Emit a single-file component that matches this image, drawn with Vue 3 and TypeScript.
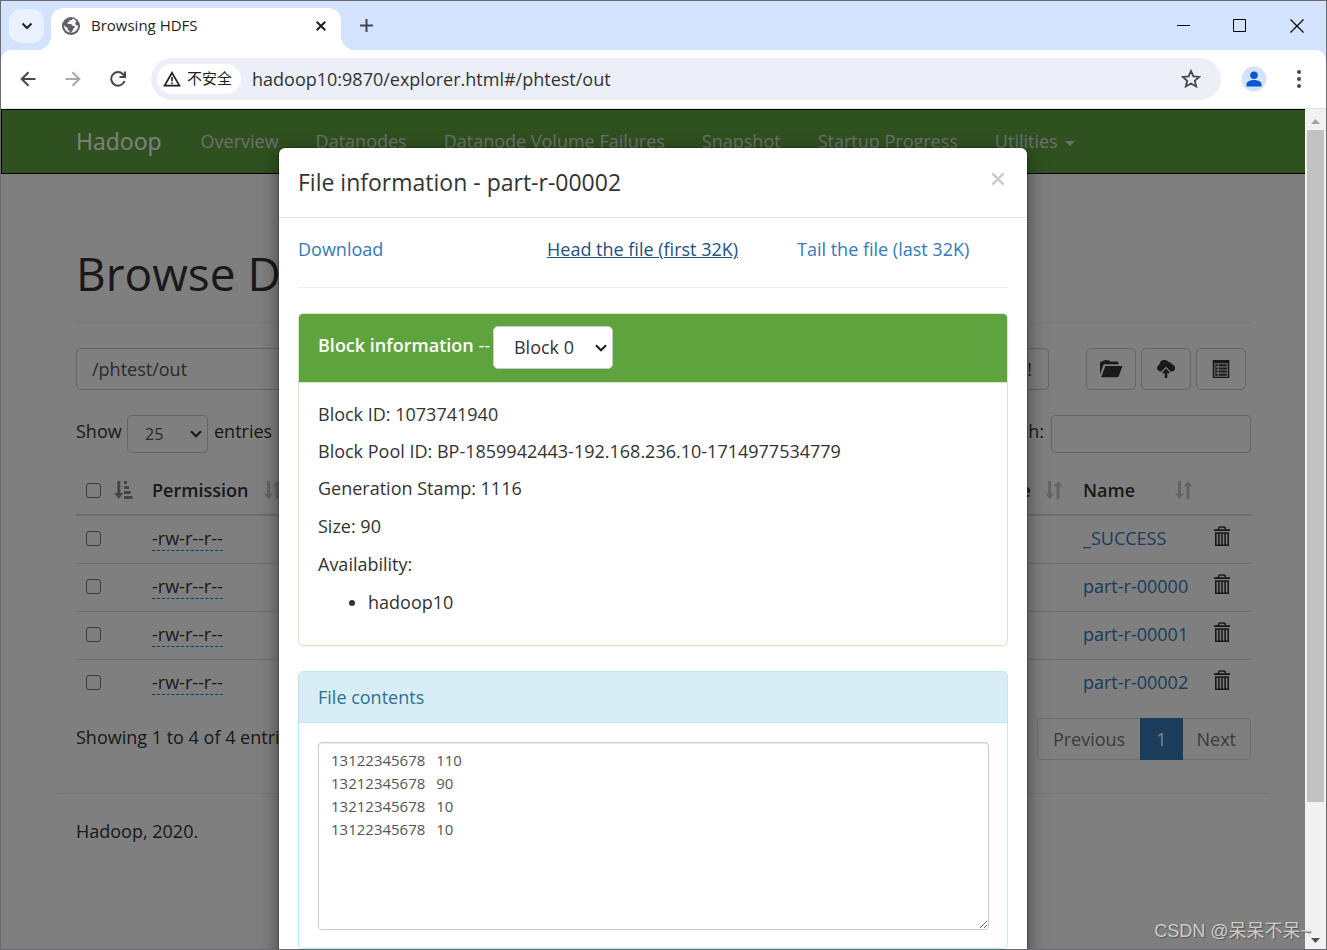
<script setup lang="ts">
import { ref } from 'vue'

const navItems: string[] = ['Overview', 'Datanodes', 'Datanode Volume Failures', 'Snapshot', 'Startup Progress']
const files: string[] = ['_SUCCESS', 'part-r-00000', 'part-r-00001', 'part-r-00002']
const blockInfo: string[] = [
  'Block ID: 1073741940',
  'Block Pool ID: BP-1859942443-192.168.236.10-1714977534779',
  'Generation Stamp: 1116',
  'Size: 90',
  'Availability:',
]
const url = ref('hadoop10:9870/explorer.html#/phtest/out')
const path = ref('/phtest/out')
const search = ref('')
const contents = ref('13122345678\t110\n13212345678\t90\n13212345678\t10\n13122345678\t10\n')
</script>

<template>
  <div class="window">
    <header class="tabstrip">
      <button class="tab-search" aria-label="Search tabs">
        <svg width="12" height="8" viewBox="0 0 12 8"><path d="M1.5 1.5 6 6l4.500-4.500" fill="none" stroke="#1f1f1f" stroke-width="2" /></svg>
      </button>
      <div class="tab">
        <svg class="globe" width="18" height="18" viewBox="0 0 18 18">
          <circle cx="9" cy="9" r="9" fill="#5f6368" />
          <path d="M10.500 1.800c-.3 1.500-1.600 1.600-2.800 1.700-.8.100-.5 1-.9 1.500-.5.500-1.600.3-1.500 1.300.1.800 1.100.6 2 .6 1.200 0 2.500 0 2.800 1.100.2.800.9.900 1.700.9 1.400 0 1.200 1.500.4 2.200-.9.800-1.300 1.300-1.500 2.500-.1.900-1 1.300-1.900 1.700l-1.300.4c.2-1.400-.2-2.200-1.200-2.600-.9-.4-.7-1.500-.7-2.300-1.800-.3-3-1.600-3.700-3 0 4 2.700 7.800 7.100 7.800 4 0 7.200-3.200 7.200-7.200-1.600.3-2.800-.5-2.900-1.700-.1-1.400.2-1.800 1.200-2.300-1-1.400-2.400-2.400-4-2.600z" fill="#fff" />
        </svg>
        <span class="tab-title">Browsing HDFS</span>
        <button class="icon-btn" aria-label="Close tab">
          <svg width="10" height="10" viewBox="0 0 10 10"><path d="m.7.7 8.600 8.600m0-8.600L.7 9.300" stroke="#1f1f1f" stroke-width="2" /></svg>
        </button>
      </div>
      <button class="icon-btn new-tab" aria-label="New tab">
        <svg width="13" height="13" viewBox="0 0 13 13"><path d="M6.500 0v13M0 6.500h13" stroke="#474747" stroke-width="2" /></svg>
      </button>
      <div class="window-controls">
        <button class="icon-btn" aria-label="Minimize"><svg width="14" height="14" viewBox="0 0 14 14"><path d="M1 6.500h13" stroke="#000" /></svg></button>
        <button class="icon-btn" aria-label="Maximize"><svg width="14" height="14" viewBox="0 0 14 14"><path d="M.5.5h12v12H.5z" fill="none" stroke="#000" /></svg></button>
        <button class="icon-btn" aria-label="Close"><svg width="14" height="14" viewBox="0 0 14 14"><path d="m.5.5 13 13m0-13-13 13" stroke="#000" stroke-width="1.200" /></svg></button>
      </div>
    </header>

    <div class="toolbar-wrap">
      <div class="toolbar">
        <button class="icon-btn nav-btn" aria-label="Back">
          <svg width="16" height="16" viewBox="0 0 16 16"><path d="M15.500 8H2M8.500 1.200 1.700 8l6.800 6.800" fill="none" stroke="#474747" stroke-width="2" /></svg>
        </button>
        <button class="icon-btn nav-btn" aria-label="Forward">
          <svg width="16" height="16" viewBox="0 0 16 16"><path d="M.5 8H14M7.500 1.200 14.300 8l-6.800 6.800" fill="none" stroke="#a9a9a9" stroke-width="2" /></svg>
        </button>
        <button class="icon-btn reload" aria-label="Reload">
          <svg width="16" height="16" viewBox="0 0 16 16"><path d="M14.500 10A6.800 6.800 0 1 1 13 3.200l1.200 1.600M15 .5V6H9.500" fill="none" stroke="#474747" stroke-width="2" /></svg>
        </button>
        <div class="omnibox">
          <button class="chip">
            <svg width="18" height="16" viewBox="0 0 18 16"><path d="M9 1.800 16.400 14.700H1.600z" fill="none" stroke="#1f1f1f" stroke-width="1.700" /><path d="M9 6v4.300m0 1.200v1.600" stroke="#1f1f1f" stroke-width="1.600" /></svg>
            <span>不安全</span>
          </button>
          <input v-model="url" class="url" type="text" aria-label="Address" />
          <button class="icon-btn" aria-label="Bookmark">
            <svg width="20" height="20" viewBox="0 0 20 20"><path d="m10 2 2.400 5.400 5.900.5-4.500 3.900 1.400 5.700L10 14.500l-5.200 3 1.400-5.700L1.700 7.900l5.900-.5z" fill="none" stroke="#474747" stroke-width="1.800" /></svg>
          </button>
        </div>
        <button class="icon-btn profile" aria-label="Profile">
          <svg width="26" height="26" viewBox="0 0 26 26"><circle cx="13" cy="13" r="12.500" fill="#d3e3fd" /><circle cx="13" cy="9.200" r="3.800" fill="#0b57d0" /><path d="M5.500 20.500V18c0-2.400 4-4 7.500-4s7.500 1.600 7.500 4v2.500z" fill="#0b57d0" /></svg>
        </button>
        <button class="icon-btn" aria-label="Menu">
          <svg width="4" height="18" viewBox="0 0 4 18"><g fill="#474747"><circle cx="2" cy="2" r="2" /><circle cx="2" cy="9" r="2" /><circle cx="2" cy="16" r="2" /></g></svg>
        </button>
      </div>
    </div>

    <div class="viewport">
      <div class="page">
        <nav class="navbar">
          <div class="container nav-inner">
            <a class="brand" href="#">Hadoop</a>
            <a v-for="item in navItems" :key="item" class="nav-link" href="#">{{ item }}</a>
            <a class="nav-link" href="#">Utilities <i class="caret"></i></a>
          </div>
        </nav>

        <main class="container">
          <h1>Browse Directory</h1>
          <div class="path-row">
            <input v-model="path" class="path" type="text" aria-label="Directory path" />
            <button class="btn go">Go!</button>
            <div class="tools">
              <button class="btn tool" aria-label="Create directory">
                <svg width="24" height="18" viewBox="0 0 24 18"><path d="M1 14.500V3.500C1 2 2 1.300 3.300 1.300H4l1-1.100h5l1.200 1.300h6.300c1.500 0 2 .8 2 2v.8H6.200c-1 0-1.700.5-2.100 1.300z" fill="#333" /><path d="M6.300 6h17.200l-3.800 10.300c-.2.600-.7 1-1.400 1H2.200z" fill="#333" /></svg>
              </button>
              <button class="btn tool" aria-label="Upload files">
                <svg width="20" height="20" viewBox="0 0 20 20"><path d="M3.800 12.600a3.800 3.800 0 0 1-.4-7.200A5.200 5.200 0 0 1 12.700 3a3.600 3.600 0 0 1 3.200 2.200 3.800 3.800 0 0 1 .4 7.400h-1.700L10 7.800l-4.600 4.800z" fill="#333" /><path d="m10 9.300 4.200 5h-2.900V19H8.700v-4.700H5.800z" fill="#333" /></svg>
              </button>
              <button class="btn tool" aria-label="Cut and paste">
                <svg width="18" height="20" viewBox="0 0 18 20"><path d="M.7 1h16.600v18H.7z" fill="#333" /><path d="M2.800 4.800h12.400v12.400H2.800zM6.200 5v12M4 7.900h10.500M4 11h10.500M4 14.100h10.500" fill="none" stroke="#ddd" stroke-width="1.100" /></svg>
              </button>
            </div>
          </div>

          <div class="controls-row">
            <label class="length" for="page-length">Show</label>
            <span class="select-wrap length-select">
              <select id="page-length"><option>25</option></select>
              <svg width="12" height="8" viewBox="0 0 12 8"><path d="m1 1.300 5 5 5-5" fill="none" stroke="#333" stroke-width="2.200" /></svg>
            </span>
            <span>entries</span>
            <label class="search-label" for="search">Search:</label>
            <input id="search" v-model="search" class="search" type="text" />
          </div>

          <table>
            <thead>
              <tr>
                <th class="c-check">
                  <div class="check-cell">
                    <input type="checkbox" aria-label="Select all" />
                    <svg width="19" height="19" viewBox="0 0 19 19"><path d="M3.300 0h3v12h3l-4.500 6L.3 12h3z" fill="#8a8a8a" /><path d="M10 0h3v3h-3zM10 5h5v3h-5zM10 10h6.500v3H10zM10 15h8.500v3H10z" fill="#8a8a8a" /></svg>
                  </div>
                </th>
                <th class="c-perm">
                  <div class="head-cell">Permission
                    <svg width="18" height="19" viewBox="0 0 18 19"><path d="M3 0h3v12.500h3L4.500 18 0 12.500h3zM11.500 18h3V5.500h3L13 0 8.500 5.500h3z" fill="#c8c8c8" /></svg>
                  </div>
                </th>
                <th>
                  <div class="head-cell size-head">Block Size
                    <svg width="18" height="19" viewBox="0 0 18 19"><path d="M3 0h3v12.500h3L4.500 18 0 12.500h3zM11.500 18h3V5.500h3L13 0 8.500 5.500h3z" fill="#c8c8c8" /></svg>
                  </div>
                </th>
                <th class="c-name">
                  <div class="head-cell">Name
                    <svg width="18" height="19" viewBox="0 0 18 19"><path d="M3 0h3v12.500h3L4.500 18 0 12.500h3zM11.500 18h3V5.500h3L13 0 8.500 5.500h3z" fill="#c8c8c8" /></svg>
                  </div>
                </th>
                <th class="c-del"></th>
              </tr>
            </thead>
            <tbody>
              <tr v-for="file in files" :key="file">
                <td><div class="check-cell"><input type="checkbox" :aria-label="'Select ' + file" /></div></td>
                <td><span class="perm">-rw-r--r--</span></td>
                <td></td>
                <td><a href="#">{{ file }}</a></td>
                <td>
                  <button class="icon-btn" :aria-label="'Delete ' + file">
                    <svg width="18" height="24" viewBox="0 0 18 24"><path d="M1 3.200h16v1.800H1z" fill="#333" /><path d="M5.500 3.500c0-1.700.8-2.500 2.200-2.500h2.600c1.400 0 2.200.8 2.200 2.500" fill="none" stroke="#333" stroke-width="1.500" /><path d="M2.800 7h12.400v12.200H2.800zM5.900 7v12M9 7v12m3.100-12v12" fill="none" stroke="#333" stroke-width="1.600" /></svg>
                  </button>
                </td>
              </tr>
            </tbody>
          </table>

          <div class="pager-row">
            <span>Showing 1 to 4 of 4 entries</span>
            <div class="pager">
              <button>Previous</button>
              <button class="active">1</button>
              <button>Next</button>
            </div>
          </div>
          <hr />
          <footer>Hadoop, 2020.</footer>
        </main>

        <div class="backdrop">
          <section class="modal" role="dialog" aria-label="File information">
            <header class="modal-head">
              <h4>File information - part-r-00002</h4>
              <button class="icon-btn" aria-label="Close dialog">
                <svg width="14" height="14" viewBox="0 0 14 14"><path d="m1.500 1.500 11 11m0-11-11 11" stroke="#ccc" stroke-width="2.600" /></svg>
              </button>
            </header>
            <div class="modal-body">
              <div class="links">
                <a href="#">Download</a>
                <a class="hover" href="#">Head the file (first 32K)</a>
                <a href="#">Tail the file (last 32K)</a>
              </div>
              <div class="panel green">
                <div class="panel-head">
                  <label for="block"><b>Block information</b> --</label>
                  <span class="select-wrap block-select">
                    <select id="block"><option>Block 0</option></select>
                    <svg width="12" height="8" viewBox="0 0 12 8"><path d="m1 1.300 5 5 5-5" fill="none" stroke="#222" stroke-width="2.200" /></svg>
                  </span>
                </div>
                <div class="panel-body info">
                  <p v-for="line in blockInfo" :key="line">{{ line }}</p>
                  <ul><li>hadoop10</li></ul>
                </div>
              </div>
              <div class="panel blue">
                <div class="panel-head"><label for="contents">File contents</label></div>
                <div class="panel-body">
                  <textarea id="contents" v-model="contents"></textarea>
                </div>
              </div>
            </div>
          </section>
        </div>
      </div>

      <div class="scrollbar">
        <svg width="9" height="5" viewBox="0 0 9 5"><path d="M0 5 4.500 0 9 5z" fill="#a3a3a3" /></svg>
        <div class="track"><div class="thumb"></div></div>
        <svg width="9" height="5" viewBox="0 0 9 5"><path d="m0 0 4.500 5L9 0z" fill="#505050" /></svg>
      </div>
    </div>
    <div class="watermark">CSDN @呆呆不呆~</div>
  </div>
</template>

<style>
body { margin: 0; }
</style>

<style scoped>
* { box-sizing: border-box; }
.window {
  position: relative;
  display: flex;
  flex-direction: column;
  height: 100vh;
  overflow: hidden;
  border: 1px solid #6a6a70;
  background: #fff;
  font-family: "Open Sans", "Noto Sans CJK SC", sans-serif;
  font-size: 18px;
  line-height: 27px;
  color: #333;
}
button, input, select, textarea { font: inherit; color: inherit; margin: 0; }
svg { display: block; flex: none; }
a { color: #337ab7; text-decoration: none; }
.icon-btn { border: 0; padding: 0; background: none; display: flex; align-items: center; justify-content: center; }

.tabstrip { display: flex; align-items: center; height: 49px; flex: none; background: #d3e3fd; padding-left: 8px; }
.tab-search { width: 35px; height: 34px; border: 0; border-radius: 12px; background: #e9f1fe; display: flex; align-items: center; justify-content: center; padding: 0; }
.tab {
  position: relative;
  display: flex;
  align-items: center;
  align-self: flex-end;
  width: 290px;
  height: 42px;
  margin-left: 7px;
  padding: 0 15px 7px 11px;
  border-radius: 13px 13px 0 0;
  background: #fff;
}
.tab::before, .tab::after { content: ""; position: absolute; bottom: 0; width: 14px; height: 14px; }
.tab::before { left: -14px; background: radial-gradient(circle at 0 0, transparent 14px, #fff 14px); }
.tab::after { right: -14px; background: radial-gradient(circle at 100% 0, transparent 14px, #fff 14px); }
.tab-title { flex: 1; margin-left: 11px; font-size: 15px; color: #1f1f1f; }
.new-tab { margin-left: 19px; }
.window-controls { display: flex; gap: 43px; margin-left: auto; padding-right: 22px; }

.toolbar-wrap { flex: none; background: #d3e3fd; }
.toolbar { display: flex; align-items: center; height: 59px; padding: 0 25px 1px 19px; background: #fff; border-bottom: 1px solid #dde1e6; border-radius: 10px 10px 0 0; }
.nav-btn { margin-right: 29px; }
.reload { margin-right: 25px; }
.omnibox { flex: 1; display: flex; align-items: center; height: 42px; padding: 0 20px 0 6px; border-radius: 21px; background: #eceff8; }
.chip { display: flex; align-items: center; gap: 6px; height: 30px; padding: 0 9px 0 6px; border: 0; border-radius: 15px; background: #fff; font-size: 15px; color: #1f1f1f; }
.url { flex: 1; min-width: 0; margin-left: 11px; padding: 2px 0 0; border: 0; outline: 0; background: none; color: #333; }
.profile { margin: 0 30px 0 20px; }

.viewport { flex: 1; min-height: 0; display: flex; }
.page { position: relative; flex: 1; min-width: 0; overflow: hidden; background: #fff; }
.container { margin: 0 34px 0 56px; padding: 0 20px 0 19px; }
.navbar { height: 65px; background: #5fa33e; border: solid #000; border-width: 1px 0 1px 1px; }
.nav-inner { display: flex; align-items: center; height: 63px; padding-right: 0; margin-left: 55px; white-space: nowrap; }
.brand { margin-right: 39px; font-size: 23px; color: #fff; }
.nav-link { margin-right: 37px; color: #ddd; }
.caret { display: inline-block; margin-left: 3px; border: 5px solid transparent; border-top-color: #ddd; border-bottom: 0; vertical-align: middle; }

h1 { margin: 64px 0 25px; padding: 5px 0 19px; border-bottom: 1px solid #eee; font-weight: 400; font-size: 46px; line-height: 60px; }
.path-row { display: flex; height: 42px; }
.path { flex: 1; min-width: 0; padding: 0 15px; border: 1px solid #ccc; border-radius: 5px 0 0 5px; color: #555; }
.btn { border: 1px solid #ccc; border-radius: 5px; background: #fff; }
.go { padding: 0 16px; border-radius: 0 5px 5px 0; border-left: 0; }
.tools { display: flex; gap: 5px; margin: 0 5px 0 37px; }
.tool { display: flex; align-items: center; justify-content: center; width: 50px; padding: 0; }
.controls-row { display: flex; height: 38px; margin-top: 25px; line-height: 32px; }
.select-wrap { position: relative; display: block; }
.select-wrap select { appearance: none; width: 100%; height: 100%; border: 1px solid #ccc; border-radius: 5px; background: #fff; }
.select-wrap svg { position: absolute; right: 6px; top: 50%; margin-top: -4px; pointer-events: none; }
.length { width: 51px; }
.length-select { width: 81px; margin-right: 6px; font-size: 16px; color: #555; }
.length-select select { padding: 0 17px; }
.search-label { margin-left: auto; margin-right: 7px; }
.search { width: 200px; border: 1px solid #ccc; border-radius: 4px; background: #fff; }

table { width: 100%; margin-top: 23px; border-collapse: collapse; table-layout: fixed; }
th { height: 39px; padding: 0 0 10px; border-bottom: 2px solid #ddd; text-align: left; font-weight: 600; }
td { height: 48px; padding: 0 0 2px; border-top: 1px solid #ddd; }
tbody tr:first-child td { border-top: 0; }
.c-check { width: 76px; }
.c-perm { width: 150px; }
.c-name { width: 130px; }
.c-del { width: 38px; }
.check-cell { display: flex; align-items: center; gap: 13px; padding-left: 10px; }
.check-cell input { appearance: none; width: 15px; height: 15px; border: 1px solid #767676; border-radius: 3px; background: #fff; }
.head-cell { display: flex; align-items: center; justify-content: space-between; padding-right: 20px; }
.size-head { justify-content: flex-end; gap: 14px; }
.perm { border-bottom: 1px dashed #08c; }

.pager-row { display: flex; justify-content: space-between; height: 42px; margin-top: 11px; line-height: 38px; }
.pager { display: flex; }
.pager button { border: 1px solid #ddd; background: #fff; color: #777; padding: 0 14px; }
.pager button:first-child { border-radius: 5px 0 0 5px; border-right: 0; padding: 0 15px; }
.pager button:last-child { border-radius: 0 5px 5px 0; border-left: 0; }
.pager .active { padding: 0 15px; border-color: #337ab7; background: #337ab7; color: #fff; }
hr { margin: 33px -19px 24px; border: 0; border-top: 1px solid #eee; }

.backdrop { position: absolute; inset: 0; padding: 39px 0; background: rgba(0, 0, 0, 0.5); overflow: hidden; }
.modal { width: 748px; margin: 0 auto; background: #fff; border-radius: 6px; box-shadow: 0 0 0 1px rgba(0, 0, 0, 0.2), 0 7px 20px rgba(0, 0, 0, 0.5); }
.modal-head { display: flex; align-items: center; justify-content: space-between; height: 70px; padding: 0 22px 7px 19px; border-bottom: 1px solid #e5e5e5; }
.modal-head h4 { margin: 0; padding-top: 6px; font-weight: 400; font-size: 23px; line-height: 34px; }
.modal-body { padding: 0 19px 40px; }
.links { display: grid; grid-template-columns: 249px 250px 1fr; height: 70px; padding-top: 18px; margin-bottom: 25px; border-bottom: 1px solid #eee; white-space: nowrap; }
.hover { color: #23527c; text-decoration: underline; }
.panel { margin-bottom: 25px; border: 1px solid; border-radius: 5px; box-shadow: 0 1px 1px rgba(0, 0, 0, 0.05); overflow: hidden; }
.panel-head { display: flex; padding: 12px 19px 11px; border-bottom: 1px solid; border-color: inherit; }
.panel-body { padding: 19px 18px 18px 19px; }
.green { border-color: #d6e9c6; }
.green .panel-head { gap: 3px; height: 69px; background: #5fa33e; color: #fff; line-height: 38px; }
.green b { font-weight: 600; }
.block-select { width: 120px; height: 43px; color: #333; line-height: 27px; }
.block-select select { padding: 0 20px; }
.blue { border-color: #bce8f1; }
.blue .panel-head { background: #d9edf7; color: #31708f; }
.info { height: 262px; padding-top: 18px; }
.info p { margin: 0 0 10px; }
.info p:nth-child(n + 3) { margin-bottom: 11px; }
.info ul { margin: 0; padding-left: 50px; }
textarea { display: block; width: 100%; height: 188px; padding: 6px 12px; border: 1px solid #ccc; border-radius: 4px; box-shadow: inset 0 1px 1px rgba(0, 0, 0, 0.075); font-size: 15px; line-height: 23px; tab-size: 9; color: #555; resize: vertical; }

.scrollbar { display: flex; flex-direction: column; align-items: center; width: 21px; padding: 10px 0 6px; background: #f1f1f1; }
.track { flex: 1; width: 17px; margin: 6px 0 8px; }
.thumb { height: 84%; background: #c1c1c1; }
.watermark { position: absolute; right: 15px; bottom: 4px; font-family: "Liberation Sans", "Noto Sans CJK SC", sans-serif; color: #ccc; text-shadow: 1px 1px 1px #555; }
</style>
